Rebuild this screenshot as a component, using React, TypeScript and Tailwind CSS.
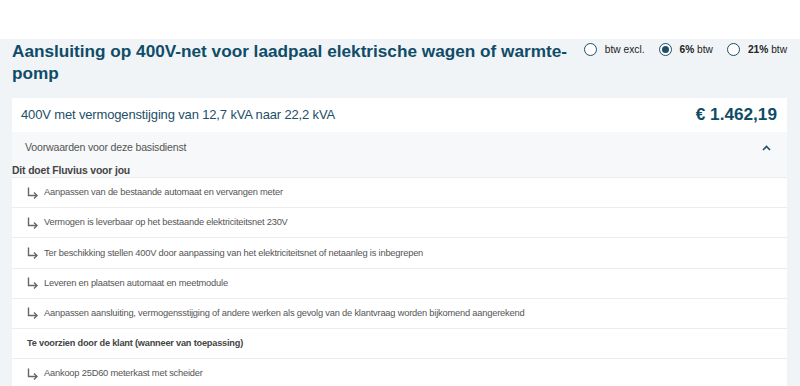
import React from 'react';

function Arrow() {
  return (
    <svg width="11" height="12" viewBox="0 0 11 12" className="shrink-0" fill="none" stroke="#666" strokeWidth="1.4">
      <path d="M1.5 0.5V8.5H10" />
      <path d="M7 5.5L10 8.5L7 11.5" />
    </svg>
  );
}

function Radio({ checked }: { checked?: boolean }) {
  return (
    <span className="flex size-[13px] shrink-0 items-center justify-center rounded-full border-[1.5px] border-[#1d4f68] bg-white">
      {checked && <span className="size-[7px] rounded-full bg-[#1d4f68]" />}
    </span>
  );
}

const items = [
  'Aanpassen van de bestaande automaat en vervangen meter',
  'Vermogen is leverbaar op het bestaande elektriciteitsnet 230V',
  'Ter beschikking stellen 400V door aanpassing van het elektriciteitsnet of netaanleg is inbegrepen',
  'Leveren en plaatsen automaat en meetmodule',
  'Aanpassen aansluiting, vermogensstijging of andere werken als gevolg van de klantvraag worden bijkomend aangerekend',
];

export default function App() {
  return (
    <div className="h-[386px] overflow-hidden bg-white font-['Liberation_Sans',Arial,sans-serif]">
      <div className="h-[39px] bg-white" />
      <div className="h-[347px] bg-[#f1f4f7] pl-3 pr-[13px]">
        <div className="flex items-start justify-between gap-1">
          <h1 className="min-w-0 flex-1 pt-[1px] text-[17.2px] leading-[22px] font-bold text-[#0f4c68]">
            Aansluiting op 400V-net voor laadpaal elektrische wagen of warmte-pomp
          </h1>
          <div className="flex shrink-0 items-center pt-[3px] text-[10.2px] whitespace-nowrap text-[#222]">
            <label className="flex items-center gap-[8px]">
              <Radio />
              <span>btw excl.</span>
            </label>
            <label className="ml-[14px] flex items-center gap-[8px]">
              <Radio checked />
              <span><b>6%</b> btw</span>
            </label>
            <label className="ml-[14px] flex items-center gap-[8px]">
              <Radio />
              <span><b>21%</b> btw</span>
            </label>
          </div>
        </div>

        <div className="mt-[14px] bg-white">
          <div className="flex h-[34px] items-center justify-between pl-[9px] pr-[10px]">
            <span className="text-[13px] tracking-[-0.15px] text-[#1d4f68]">400V met vermogenstijging van 12,7 kVA naar 22,2 kVA</span>
            <span className="text-[17.2px] font-bold text-[#0f4c68]">€ 1.462,19</span>
          </div>
          <div className="bg-[#f7f8f9]">
            <div className="flex h-[32px] items-center justify-between pl-[13px] pr-[16px]">
              <span className="text-[10.6px] tracking-[-0.2px] text-[#555]">Voorwaarden voor deze basisdienst</span>
              <svg width="9" height="6" viewBox="0 0 9 6" fill="none" stroke="#1d4f68" strokeWidth="1.6">
                <path d="M1 5L4.5 1.5L8 5" />
              </svg>
            </div>
            <div className="h-[13px] text-[10.4px] leading-[13px] font-bold tracking-[-0.15px] text-[#444]">Dit doet Fluvius voor jou</div>
          </div>
          <div className="border-t border-[#ececec]">
            {items.map((t) => (
              <div key={t} className="flex h-[30.2px] items-center gap-[6px] border-b border-[#ececec] pl-[15px] text-[9.3px] tracking-[-0.2px] text-[#555]">
                <Arrow />
                <span className="pt-[1px]">{t}</span>
              </div>
            ))}
            <div className="flex h-[30.2px] items-center border-b border-[#ececec] pl-[15px] text-[9.2px] font-bold tracking-[-0.2px] text-[#444]">
              Te voorzien door de klant (wanneer van toepassing)
            </div>
            <div className="flex h-[30.2px] items-center gap-[6px] border-b border-[#ececec] pl-[15px] text-[9.3px] tracking-[-0.2px] text-[#555]">
              <Arrow />
              <span className="pt-[1px]">Aankoop 25D60 meterkast met scheider</span>
            </div>
          </div>
        </div>
      </div>
    </div>
  );
}
